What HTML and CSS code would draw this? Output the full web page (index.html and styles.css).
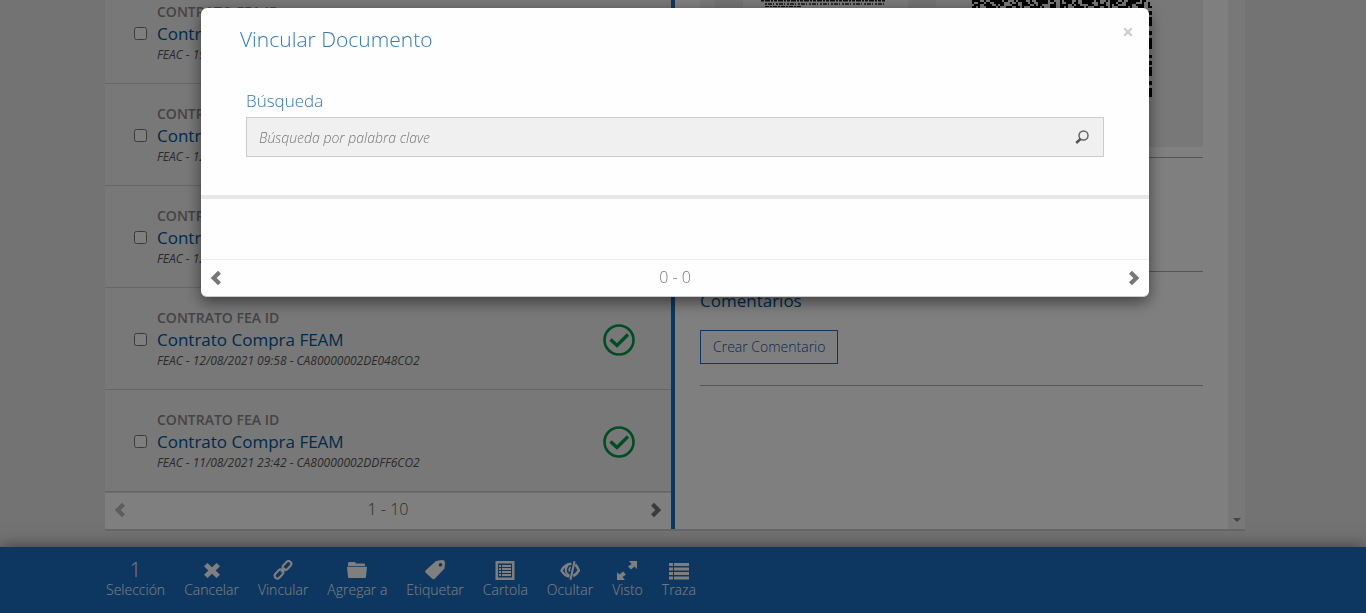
FILE: index.html
```html
<!DOCTYPE html>
<html lang="es">
<head>
<meta charset="utf-8">
<title>Vincular Documento</title>
<link rel="stylesheet" href="styles.css">
</head>
<body>
<svg class="defs" aria-hidden="true">
  <symbol id="i-left" viewBox="0 0 12 16"><path d="M8 .8 11 3.800 6.700 8 11 12.200 8 15.200.7 8z"/></symbol>
  <symbol id="i-right" viewBox="0 0 12 16"><path d="M4 .8 1 3.800 5.300 8 1 12.200 4 15.200 11.300 8z"/></symbol>
  <symbol id="i-ok" viewBox="0 0 32 32"><circle cx="16" cy="16" r="14.500" fill="none" stroke="currentColor" stroke-width="2.600"/><path d="M7.500 15.500 14 21.500 25 10.500" fill="none" stroke="currentColor" stroke-width="3.400"/></symbol>
</svg>
<div class="app">
  <main class="workspace">
    <section class="list-pane">
      <ul class="list">
        <li class="item"><input type="checkbox" id="d1"><label for="d1"><span class="kind">CONTRATO FEA ID</span><span class="name">Contrato Compra FEAM</span><span class="meta">FEAC - 19/08/2021</span></label></li>
        <li class="item"><input type="checkbox" id="d2"><label for="d2"><span class="kind">CONTRATO FEA ID</span><span class="name">Contrato Compra FEAM</span><span class="meta">FEAC - 12/08/2021</span></label></li>
        <li class="item"><input type="checkbox" id="d3"><label for="d3"><span class="kind">CONTRATO FEA ID</span><span class="name">Contrato Compra FEAM</span><span class="meta">FEAC - 12/08/2021</span></label></li>
        <li class="item"><input type="checkbox" id="d4"><label for="d4"><span class="kind">CONTRATO FEA ID</span><span class="name">Contrato Compra FEAM</span><span class="meta">FEAC - 12/08/2021 09:58 - CA80000002DE048CO2</span></label><svg class="ok"><use href="#i-ok"/></svg></li>
        <li class="item"><input type="checkbox" id="d5"><label for="d5"><span class="kind">CONTRATO FEA ID</span><span class="name">Contrato Compra FEAM</span><span class="meta">FEAC - 11/08/2021 23:42 - CA80000002DDFF6CO2</span></label><svg class="ok"><use href="#i-ok"/></svg></li>
      </ul>
      <nav class="pager list-pager">
        <button class="arrow off" aria-label="Anterior"><svg><use href="#i-left"/></svg></button>
        <span>1 - 10</span>
        <button class="arrow" aria-label="Siguiente"><svg><use href="#i-right"/></svg></button>
      </nav>
    </section>
    <section class="detail">
      <div class="preview">
        <div class="carousel">
          <svg class="sheet" viewBox="0 0 165 125"><rect width="165" height="125" fill="#f4f4f4"/><g stroke="#222"><path d="M18 .5H142" stroke-width="2" stroke-dasharray="3 1 5 1 2 1"/><path d="M22 4H142" stroke-width="2" stroke-dasharray="2 1 4 1 1 2" stroke="#555"/><path d="M22 6.500H59" stroke-width="1" stroke-dasharray="4 1 2 1"/></g></svg>
        </div>
        <svg class="qr" viewBox="0 0 180 97" shape-rendering="crispEdges"><g stroke="#000" stroke-width="2"><path d="M0 1H180" stroke-dasharray="8 4 2 4 12 2 4 6 2 2"/><path d="M0 3H180" stroke-dasharray="2 4 6 2 4 4 10 6 2 4"/><path d="M2 5H180" stroke-dasharray="6 4 8 4 2 2 4 8"/><path d="M0 7H180" stroke-dasharray="4 2 2 6 10 2 2 6 6 4"/><path d="M178 11V97" stroke-width="4" stroke-dasharray="4 2 9 5 4 3 11 6 3 3"/></g></svg>
      </div>
      <hr>
      <div class="linked"></div>
      <hr>
      <h2>Comentarios</h2>
      <button class="create">Crear Comentario</button>
      <hr>
    </section>
    <div class="scroll" aria-hidden="true"><i></i></div>
  </main>
  <footer class="toolbar">
    <div class="tools">
      <div class="tool"><b>1</b><span>Selección</span></div>
      <button class="tool"><svg viewBox="0 0 20 20"><path d="M5.500 3 10 7.200 14.500 3 18 6.300 13.700 10.500 18 14.700 14.500 18 10 13.800 5.500 18 2 14.700 6.300 10.500 2 6.300z"/></svg><span>Cancelar</span></button>
      <button class="tool"><svg viewBox="0 0 20 20"><g fill="none" stroke="currentColor" stroke-width="2"><rect x="-5" y="-2.800" width="10" height="5.600" rx="2.800" transform="translate(14 5.500) rotate(-47)"/><rect x="-5" y="-2.800" width="10" height="5.600" rx="2.800" transform="translate(6 14) rotate(-47)"/><path d="M8 12 12 8"/></g></svg><span>Vincular</span></button>
      <button class="tool"><svg viewBox="0 0 20 20"><path d="M2 2h6l1 1.500h8q1 0 1 1v1.500H1V3z"/><path d="M0 6.800h20l-1 10.200q-.1 1-1 1H2q-.9 0-1-1z"/></svg><span>Agregar a</span></button>
      <button class="tool"><svg viewBox="0 0 20 20"><path fill-rule="evenodd" d="M11 1 17 0q3-.2 3 2.500l-.5 6L10 18.500q-1.500 1.500-3 0L1 13q-1.500-1.500 0-3zM15.500 3a1.800 1.800 0 1 0 .01 0z"/></svg><span>Etiquetar</span></button>
      <button class="tool"><svg viewBox="0 0 20 20"><path fill-rule="evenodd" d="M.5 1h19v19H.5zM3 3.500v14h14v-14z"/><path d="M4 5h2v2H4zM7 5h9v2H7zM4 8h2v2H4zM7 8h9v2H7zM4 11h2v2H4zM7 11h9v2H7zM4 14h2v2H4zM7 14h9v2H7z"/></svg><span>Cartola</span></button>
      <button class="tool"><svg viewBox="0 0 20 20"><g fill="none" stroke="currentColor"><path d="M11.500 3.800Q5 4 1.500 10.500q2.500 5 8 6.200" stroke-width="2.400"/><path d="M15.200 4.500q2.300 2 3.600 6-2 3.500-5.600 5.500" stroke-width="2.600"/><path d="M8 5Q4.500 9 6.500 13q1.500 2 3 2" stroke-width="2"/><path d="M10.500 7q-2 2-.8 4.500" stroke-width="1.600"/></g><path d="m13.500 1 2 .5L11.500 20l-2-.5z"/></svg><span>Ocultar</span></button>
      <button class="tool"><svg viewBox="0 0 20 20"><path d="M12 1h8v8l-2.500-2.500-3.500 3-3-3L14.500 4zM0 20v-8l2.500 2.500L6 11.500l3 3L5.500 17 8 20z"/></svg><span>Visto</span></button>
      <button class="tool"><svg viewBox="0 0 20 20"><path d="M0 3h4v3H0zM5 3h15v3H5zM0 7.500h4v3H0zM5 7.500h15v3H5zM0 12h4v3H0zM5 12h15v3H5zM0 16.500h4v3H0zM5 16.500h15v3H5z"/></svg><span>Traza</span></button>
    </div>
  </footer>
</div>
<div class="overlay">
  <div class="modal" role="dialog" aria-modal="true" aria-labelledby="title">
    <header class="modal-head"><h1 id="title">Vincular Documento</h1><button class="close" aria-label="Cerrar">×</button></header>
    <form class="search">
      <label for="q">Búsqueda</label>
      <div class="field"><input type="text" id="q" placeholder="Búsqueda por palabra clave"><button type="button" aria-label="Buscar"><svg viewBox="0 0 14 14"><circle cx="8.500" cy="5.500" r="4.500" fill="none" stroke="#666" stroke-width="1.500"/><path d="M5.500 9 1.200 13" stroke="#555" stroke-width="2.400"/></svg></button></div>
    </form>
    <div class="results"></div>
    <nav class="pager modal-pager">
      <button class="arrow" aria-label="Anterior"><svg><use href="#i-left"/></svg></button>
      <span>0 - 0</span>
      <button class="arrow" aria-label="Siguiente"><svg><use href="#i-right"/></svg></button>
    </nav>
  </div>
</div>
</body>
</html>
```
FILE: styles.css
```css
* { box-sizing: border-box; }
body { margin: 0; font-family: "Open Sans", sans-serif; font-size: 14px; color: #555; background: #e6e6e6; }
button { border: 0; padding: 0; background: none; font: inherit; color: inherit; }
h1, h2, ul { margin: 0; padding: 0; font-weight: 400; }
svg { display: block; fill: currentColor; }
.defs { position: absolute; width: 0; height: 0; }

/* page */
.app { display: flex; flex-direction: column; height: 100vh; overflow: hidden; }
.workspace { flex: 1; min-height: 0; display: flex; width: calc(100% - 16px); max-width: 1140px; margin: 0 0 18px max(0px, calc((100% - 1156px) / 2)); background: #fff; box-shadow: 0 2px 0 #ccc; }

/* document list */
.list-pane { flex: 0 0 570px; display: flex; flex-direction: column; justify-content: flex-end; min-height: 0; overflow: hidden; border-right: 4px solid #1b6dc1; }
.list { list-style: none; }
.item { display: flex; align-items: center; height: 102px; padding: 2px 36px 0 29px; background: #f0f0f0; border-bottom: 1px solid #ccc; }
.item input { width: 13px; height: 13px; margin: 0 10px 0 0; }
.item label { flex: 1; display: flex; flex-direction: column; padding-bottom: 2px; }
.kind { line-height: 20px; font-size: 14px; font-weight: 600; color: #888; }
.name { line-height: 24px; font-size: 17px; color: #005596; }
.meta { line-height: 18px; font-size: 12px; font-style: italic; color: #555; }
.ok { width: 32px; height: 32px; color: #00984a; }

.pager { flex: none; display: flex; justify-content: space-between; align-items: center; height: 37px; padding: 0 9px; font-size: 16px; font-weight: 300; }
.pager span { padding-bottom: 3px; }
.arrow svg { width: 12px; height: 16px; }
.list-pager { padding-bottom: 2px; border-top: 1px solid #ddd; }
.list-pager .arrow { color: #777; }
.list-pager .arrow.off { color: #bbb; }

/* detail */
.detail { flex: 1; min-width: 0; padding: 0 25px; overflow: hidden; }
.preview { display: flex; align-items: flex-start; justify-content: space-between; height: 147px; padding: 0 51px 0 15px; background: #f0f0f0; }
.carousel { padding: 0 28px; background: #e6e6e6; }
.sheet { width: 165px; height: 125px; }
.qr { width: 180px; height: 97px; }
.detail hr { height: 1px; margin: 0; border: 0; background: #aaa; }
.preview + hr { margin-top: 10px; }
.linked { height: 113px; }
.detail h2 { margin-top: 17px; line-height: 24px; font-size: 17px; color: #005596; }
.create { display: block; height: 34px; margin: 17px 0 21px; padding: 0 12px 1px; border: 1px solid #1b6dc1; font-size: 14px; font-weight: 300; color: #1b4d9b; }
.scroll { flex: 0 0 17px; display: flex; align-items: flex-end; justify-content: center; padding-bottom: 7px; background: #f1f1f1; }
.scroll i { border: 4px solid transparent; border-top-color: #888; border-bottom: 0; }

/* actions */
.toolbar { flex: none; height: 66px; background: #1b6dc1; color: #fff; box-shadow: 0 0 16px rgba(0, 0, 0, .5); }
.tools { display: flex; gap: 19px; width: calc(100% - 16px); max-width: 1140px; margin-left: max(0px, calc((100% - 1156px) / 2)); padding: 13px 0 0 1px; }
.tool { display: flex; flex-direction: column; align-items: center; font-weight: 300; line-height: 20px; }
.tool svg { width: 20px; height: 20px; }
.tool b { font-size: 20px; font-weight: 300; line-height: 20px; }

/* dialog */
.overlay { position: fixed; inset: 0; padding: 8px 16px 0 0; background: rgba(0, 0, 0, .5); }
.modal { width: 100%; max-width: 948px; margin: 0 auto; background: #fefefe; border-radius: 6px; border-bottom: 1px solid #ccc; box-shadow: 0 5px 15px rgba(0, 0, 0, .5); color: #777; }
.modal-head { display: flex; justify-content: space-between; padding: 15px 14px 0 39px; color: #337ab7; }
h1 { line-height: 32px; font-size: 21px; font-weight: 300; }
.close { align-self: flex-start; width: 14px; line-height: 18px; font-size: 20px; font-weight: 700; color: #ccc; }
.search { padding: 33px 45px 38px; border-bottom: 4px solid #e8e8e8; }
.search label { display: block; padding-bottom: 3px; line-height: 26px; font-size: 17px; font-weight: 300; color: #337ab7; }
.field { display: flex; align-items: center; height: 40px; padding: 0 14px 0 12px; background: #f0f0f0; border: 1px solid #ccc; }
.field input { flex: 1; min-width: 0; border: 0; padding: 0; background: none; outline: 0; font: italic 300 14px "Open Sans", sans-serif; }
.field input::placeholder { color: #777; opacity: 1; }
.field svg { width: 14px; height: 14px; }
.results { height: 61px; border-bottom: 1px solid #eee; }
.modal-pager { height: 36px; }
```
